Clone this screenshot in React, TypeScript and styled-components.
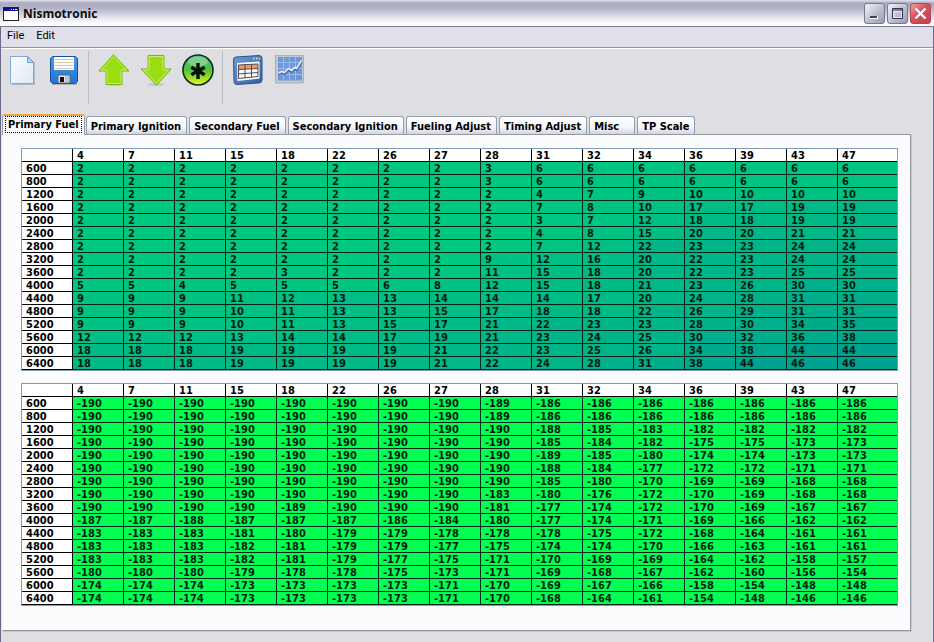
import React, { useState } from "react";
import styled, { createGlobalStyle } from "styled-components";

const GlobalStyle = createGlobalStyle`
  * { box-sizing: border-box; }
  html, body, #root { height: 100%; margin: 0; }
  body {
    background: #dfdfe3;
    color: #000;
    font-family: "DejaVu Sans Condensed", "DejaVu Sans", sans-serif;
    font-size: 11px;
  }
  button { font: inherit; color: inherit; margin: 0; }
`;

const Window = styled.div`
  min-height: 100vh;
  display: flex;
  flex-direction: column;
  border-left: 1px solid #6c6a86;
  border-right: 1px solid #6c6a86;
  background: #dfdfe3;
`;

const TitleBar = styled.header`
  display: flex;
  align-items: center;
  gap: 4px;
  height: 27px;
  margin: 0 -1px;
  padding: 1px 3px 0;
  border-bottom: 1px solid #77758c;
  background: linear-gradient(#e4e4ee 0, #a9a9c0 3px, #b2b2c6 8px, #dcdce6 16px, #fbfbfd 23px, #ffffff 25px);
`;

const Title = styled.h1`
  flex: 1;
  margin: 0;
  font: 700 12px/18px "Open Sans", sans-serif;
  color: #0c0c14;
`;

const WindowButtons = styled.div`
  display: flex;
  gap: 2px;
`;

const WindowButton = styled.button<{ $close?: boolean }>`
  display: grid;
  place-items: center;
  width: 21px;
  height: 21px;
  padding: 0;
  border: 1px solid ${(p) => (p.$close ? "#a84a58" : "#77778f")};
  border-radius: 3px;
  background: ${(p) =>
    p.$close
      ? "linear-gradient(135deg, #f0a0a0, #d8515a 45%, #c8404c)"
      : "linear-gradient(135deg, #f4f4fa, #c2c2d4 50%, #9b9bb4)"};
`;

const MenuBar = styled.nav`
  display: flex;
  height: 21px;
  border-bottom: 1px solid #9494a4;
  background: #dfe0ea;
`;

const MenuItem = styled.button`
  padding: 0 6px 2px;
  border: 0;
  background: none;
  font: 11px/18px Roboto, sans-serif;
`;

const Toolbar = styled.div`
  display: flex;
  height: 66px;
  border-top: 1px solid #fff;
`;

const ToolButton = styled.button`
  display: grid;
  place-items: center;
  width: 42px;
  height: 42px;
  padding: 0;
  border: 0;
  background: none;
`;

const Separator = styled.div`
  width: 8px;
  height: 53px;
  margin-top: 2px;
  border-left: 3px solid transparent;
  background: linear-gradient(#bcbcc2, #bcbcc2) 0 0 / 1px 100% no-repeat;
`;

const TabList = styled.div`
  display: flex;
  align-items: flex-end;
  gap: 2px;
  height: 20px;
  padding-left: 1px;
`;

const Tab = styled.button<{ $active: boolean }>`
  height: ${(p) => (p.$active ? 21 : 18)}px;
  min-width: 46px;
  margin: ${(p) => (p.$active ? "0 -1px -1px 0" : "0")};
  padding: ${(p) => (p.$active ? "0 2px" : "1px 5px 0 4px")};
  z-index: ${(p) => (p.$active ? 1 : 0)};
  border: 1px solid #91a0ac;
  border-bottom: 0;
  border-top: ${(p) => (p.$active ? "2px solid #f0a63c" : "1px solid #91a0ac")};
  border-radius: 3px 3px 0 0;
  background: ${(p) => (p.$active ? "#fcfcfe" : "linear-gradient(#ffffff, #f6f6fb 60%, #d3d3e4)")};
  font-weight: bold;
  line-height: 15px;
  text-align: left;
  white-space: nowrap;
  outline: none;
`;

const TabLabel = styled.span<{ $active: boolean }>`
  display: block;
  margin-bottom: ${(p) => (p.$active ? 2 : 0)}px;
  padding: 0 ${(p) => (p.$active ? 2 : 0)}px;
  border: ${(p) => (p.$active ? "1px dotted #000" : "0")};
`;

const Panel = styled.main`
  display: flex;
  flex-direction: column;
  gap: 12px;
  margin: 0 22px 11px 1px;
  padding: 13px 12px 24px 18px;
  border: 1px solid #919b9c;
  border-left-color: #fcfcfe;
  box-shadow: 1px 1px 0 #cccabf;
  background: #fcfcfe;
`;

const Grid = styled.table`
  width: 100%;
  border: 1px solid #7f9db9;
  border-spacing: 0;
  table-layout: fixed;
  background: #fff;
  font-weight: bold;
  line-height: 10px;
`;

const Column = styled.col<{ $wide?: boolean }>`
  width: ${(p) => (p.$wide ? "auto" : "51px")};
`;

const HeadCell = styled.th`
  height: 13px;
  padding: 2px 4px 0;
  border-right: 1px solid #000;
  border-bottom: 1px solid #000;
  text-align: left;
  &:last-child { border-right: 0; }
`;

const Corner = styled(HeadCell).attrs({ as: "td" })``;

const ValueCell = styled.td<{ $fill: string }>`
  height: 13px;
  padding: 2px 4px 0;
  border-right: 1px solid #002414;
  border-bottom: 1px solid #002414;
  background: ${(p) => p.$fill};
  color: #001c10;
  &:last-child { border-right: 0; }
`;

const loads = [4, 7, 11, 15, 18, 22, 26, 27, 28, 31, 32, 34, 36, 39, 43, 47];

const fuelMap: [number, number[]][] = [
  [600, [2, 2, 2, 2, 2, 2, 2, 2, 3, 6, 6, 6, 6, 6, 6, 6]],
  [800, [2, 2, 2, 2, 2, 2, 2, 2, 3, 6, 6, 6, 6, 6, 6, 6]],
  [1200, [2, 2, 2, 2, 2, 2, 2, 2, 2, 4, 7, 9, 10, 10, 10, 10]],
  [1600, [2, 2, 2, 2, 2, 2, 2, 2, 2, 7, 8, 10, 17, 17, 19, 19]],
  [2000, [2, 2, 2, 2, 2, 2, 2, 2, 2, 3, 7, 12, 18, 18, 19, 19]],
  [2400, [2, 2, 2, 2, 2, 2, 2, 2, 2, 4, 8, 15, 20, 20, 21, 21]],
  [2800, [2, 2, 2, 2, 2, 2, 2, 2, 2, 7, 12, 22, 23, 23, 24, 24]],
  [3200, [2, 2, 2, 2, 2, 2, 2, 2, 9, 12, 16, 20, 22, 23, 24, 24]],
  [3600, [2, 2, 2, 2, 3, 2, 2, 2, 11, 15, 18, 20, 22, 23, 25, 25]],
  [4000, [5, 5, 4, 5, 5, 5, 6, 8, 12, 15, 18, 21, 23, 26, 30, 30]],
  [4400, [9, 9, 9, 11, 12, 13, 13, 14, 14, 14, 17, 20, 24, 28, 31, 31]],
  [4800, [9, 9, 9, 10, 11, 13, 13, 15, 17, 18, 18, 22, 26, 29, 31, 31]],
  [5200, [9, 9, 9, 10, 11, 13, 15, 17, 21, 22, 23, 23, 28, 30, 34, 35]],
  [5600, [12, 12, 12, 13, 14, 14, 17, 19, 21, 23, 24, 25, 30, 32, 36, 38]],
  [6000, [18, 18, 18, 19, 19, 19, 19, 21, 22, 23, 25, 26, 34, 38, 44, 44]],
  [6400, [18, 18, 18, 19, 19, 19, 19, 21, 22, 24, 28, 31, 38, 44, 46, 46]],
];

const RAW_OFFSET = 192;

const fuelFill = (v: number) =>
  `rgb(0, ${Math.round(202 - v * 0.9)}, ${Math.round(128 + v * 0.35)})`;
const offsetFill = () => "#00ff50";

interface MapTableProps {
  label: string;
  offset: number;
  fill: (v: number) => string;
}

function MapTable({ label, offset, fill }: MapTableProps) {
  return (
    <Grid aria-label={label}>
      <colgroup>
        {loads.map((l) => (
          <Column key={l} />
        ))}
        <Column $wide />
      </colgroup>
      <thead>
        <tr>
          <Corner />
          {loads.map((l) => (
            <HeadCell key={l} scope="col">{l}</HeadCell>
          ))}
        </tr>
      </thead>
      <tbody>
        {fuelMap.map(([rpm, values]) => (
          <tr key={rpm}>
            <HeadCell scope="row">{rpm}</HeadCell>
            {values.map((v, i) => (
              <ValueCell key={loads[i]} $fill={fill(v)}>{v - offset}</ValueCell>
            ))}
          </tr>
        ))}
      </tbody>
    </Grid>
  );
}

const AppIcon = () => (
  <svg width="16" height="14" viewBox="0 0 16 14" aria-hidden="true">
    <rect x=".5" y=".5" width="15" height="13" fill="#fff" stroke="#222" />
    <path d="M1 1h14v3H1z" fill="#10108c" />
    <path d="M8 2h1v1H8zM10 2h1v1h-1zM12 2h2v1h-2z" fill="#fff" />
  </svg>
);

const NewIcon = () => (
  <svg width="32" height="32" viewBox="0 0 32 32" aria-hidden="true">
    <defs>
      <linearGradient id="sheet" x1="0" y1="0" x2="1" y2="1">
        <stop offset="0" stopColor="#fdfeff" />
        <stop offset="1" stopColor="#d9e8f5" />
      </linearGradient>
    </defs>
    <path d="M5 3h18l6 6v22H6z" fill="#8797ad" opacity=".55" />
    <path d="M4.500 2.500h17l6 6v21h-23z" fill="url(#sheet)" stroke="#84aadc" />
    <path d="M21.500 2.500v6h6z" fill="#b4d6fa" stroke="#6d9fdc" />
  </svg>
);

const SaveIcon = () => (
  <svg width="32" height="32" viewBox="0 0 32 32" aria-hidden="true">
    <defs>
      <linearGradient id="disk" x1="0" y1="0" x2="0" y2="1">
        <stop offset="0" stopColor="#4a97e6" />
        <stop offset="1" stopColor="#2476d4" />
      </linearGradient>
    </defs>
    <path d="M4 30h25" stroke="#999" strokeWidth="2" opacity=".6" />
    <path d="M4.500 2.500h23l2 2v23l-2 2h-23l-2-2v-23z" fill="url(#disk)" stroke="#164f9e" />
    <path d="M6 3h20v13H6z" fill="#fcfcfc" />
    <path d="M7 5.500h18M7 8.500h18M7 11.500h18M7 14.500h18" stroke="#dcc8bb" />
    <path d="M10 21h12v8H10z" fill="#e7e9ec" stroke="#55657c" />
    <path d="M12 23h4v5h-4z" fill="#111" />
    <path d="M17 22h4v6h-4z" fill="#bcc4ca" />
  </svg>
);

const ArrowIcon = ({ down = false }: { down?: boolean }) => (
  <svg width="32" height="32" viewBox="0 0 32 32" aria-hidden="true">
    <ellipse cx="16" cy="30.500" rx="8" ry="1.500" fill="#999" opacity=".35" />
    <g transform={down ? "rotate(180 16 16)" : undefined}>
      <path d="M15.500 .8 31 17h-7v13.500H8V17H.8z" fill="#9bdc12" stroke="#79b80f" />
      <path d="M15.600 2.600 28.500 16H23v13.500H9V16H3.200z" fill="none" stroke="#c4ee68" />
    </g>
  </svg>
);

const StarIcon = () => (
  <svg width="32" height="32" viewBox="0 0 32 32" aria-hidden="true">
    <defs>
      <linearGradient id="ball" x1="0" y1="0" x2="0" y2="1">
        <stop offset="0" stopColor="#4cb878" />
        <stop offset=".5" stopColor="#52c23c" />
        <stop offset="1" stopColor="#e8f51c" />
      </linearGradient>
    </defs>
    <circle cx="16" cy="16" r="15" fill="url(#ball)" stroke="#0b2e1c" strokeWidth="1.600" />
    <ellipse cx="16" cy="7.500" rx="10" ry="5" fill="#fff" opacity=".28" />
    <path d="M16 9v16M9.300 13.200l13.400 7.600M22.700 13.200 9.300 20.800" stroke="#061206" strokeWidth="3.400" />
  </svg>
);

const TableIcon = () => (
  <svg width="32" height="32" viewBox="0 0 32 32" aria-hidden="true">
    <defs>
      <linearGradient id="frame" x1="0" y1="0" x2="1" y2="1">
        <stop offset="0" stopColor="#6f9ad5" />
        <stop offset="1" stopColor="#355f9f" />
      </linearGradient>
    </defs>
    <path d="M4 3 27 1.500q3 0 3 3V26q0 3-3 3L5 30.500q-3 0-3-3L1.500 6q0-3 2.500-3z" fill="url(#frame)" stroke="#2f5189" />
    <path d="M21 4.500h1.500M24 4.500h1.500M27 4.500h1" stroke="#e8efff" strokeWidth="1.500" />
    <path d="M5 9 27.500 7.500V24.500L5.500 27z" fill="#f9fbff" />
    <path d="M6.500 11 26 10v4.500L6.500 15.500z" fill="#eb9b68" />
    <path d="M6.500 11 26 10V22.500L6.500 24.500zM6.500 15.500 26 14.500M6.500 20 26 18.500M13 10.800V24M19.500 10.400V23.300" fill="none" stroke="#554950" />
  </svg>
);

const ChartIcon = () => (
  <svg width="32" height="32" viewBox="0 0 32 32" aria-hidden="true">
    <path d="M1.500 1.500h28v27.500h-28z" fill="#c5c9cd" stroke="#aaaeb6" />
    <path d="M4 3h24v23.500H4z" fill="#6f98dc" />
    <path d="M9.500 3v23.500M15.500 3v23.500M21.500 3v23.500M4 8.500h24M4 14.500h24M4 20.500h24" stroke="#9dbbea" />
    <path d="m4.500 20 3-1.500 3 1 4-4 3 2 3-3 2 1 5-8" fill="none" stroke="#456fb0" strokeWidth="3" />
    <path d="m4.500 19 3-1.500 3 1 4-4 3 2 3-3 2 1 5-8" fill="none" stroke="#f2f6fc" strokeWidth="1.500" />
  </svg>
);

const tabs = [
  "Primary Fuel",
  "Primary Ignition",
  "Secondary Fuel",
  "Secondary Ignition",
  "Fueling Adjust",
  "Timing Adjust",
  "Misc",
  "TP Scale",
];

export default function App() {
  const [active, setActive] = useState(tabs[0]);
  return (
    <Window>
      <GlobalStyle />
      <TitleBar>
        <AppIcon />
        <Title>Nismotronic</Title>
        <WindowButtons>
          <WindowButton aria-label="Minimize">
            <svg width="15" height="15" aria-hidden="true">
              <path d="M3 10h8v3H3z" fill="#fff" />
              <path d="M3 10h7v2H3z" fill="#444458" />
            </svg>
          </WindowButton>
          <WindowButton aria-label="Maximize">
            <svg width="15" height="15" aria-hidden="true">
              <path d="M2.500 2.500h10v10h-10zM2 4h11" fill="none" stroke="#33334a" />
              <path d="M3.500 5.500h8v6h-8z" fill="none" stroke="#e8e8f4" />
            </svg>
          </WindowButton>
          <WindowButton $close aria-label="Close">
            <svg width="15" height="15" aria-hidden="true">
              <path d="m2.500 2.500 10 10M12.500 2.500l-10 10" stroke="#fff" strokeWidth="2.400" />
            </svg>
          </WindowButton>
        </WindowButtons>
      </TitleBar>
      <MenuBar>
        <MenuItem>File</MenuItem>
        <MenuItem>Edit</MenuItem>
      </MenuBar>
      <Toolbar role="toolbar">
        <ToolButton aria-label="New"><NewIcon /></ToolButton>
        <ToolButton aria-label="Save"><SaveIcon /></ToolButton>
        <Separator />
        <ToolButton aria-label="Upload"><ArrowIcon /></ToolButton>
        <ToolButton aria-label="Download"><ArrowIcon down /></ToolButton>
        <ToolButton aria-label="Burn"><StarIcon /></ToolButton>
        <Separator />
        <ToolButton aria-label="Table view"><TableIcon /></ToolButton>
        <ToolButton aria-label="Chart view"><ChartIcon /></ToolButton>
      </Toolbar>
      <TabList role="tablist">
        {tabs.map((t) => (
          <Tab key={t} role="tab" aria-selected={t === active} $active={t === active} onClick={() => setActive(t)}>
            <TabLabel $active={t === active}>{t}</TabLabel>
          </Tab>
        ))}
      </TabList>
      <Panel role="tabpanel" aria-label={active}>
        <MapTable label="Fuel map" offset={0} fill={fuelFill} />
        <MapTable label="Fuel map with offset" offset={RAW_OFFSET} fill={offsetFill} />
      </Panel>
    </Window>
  );
}
